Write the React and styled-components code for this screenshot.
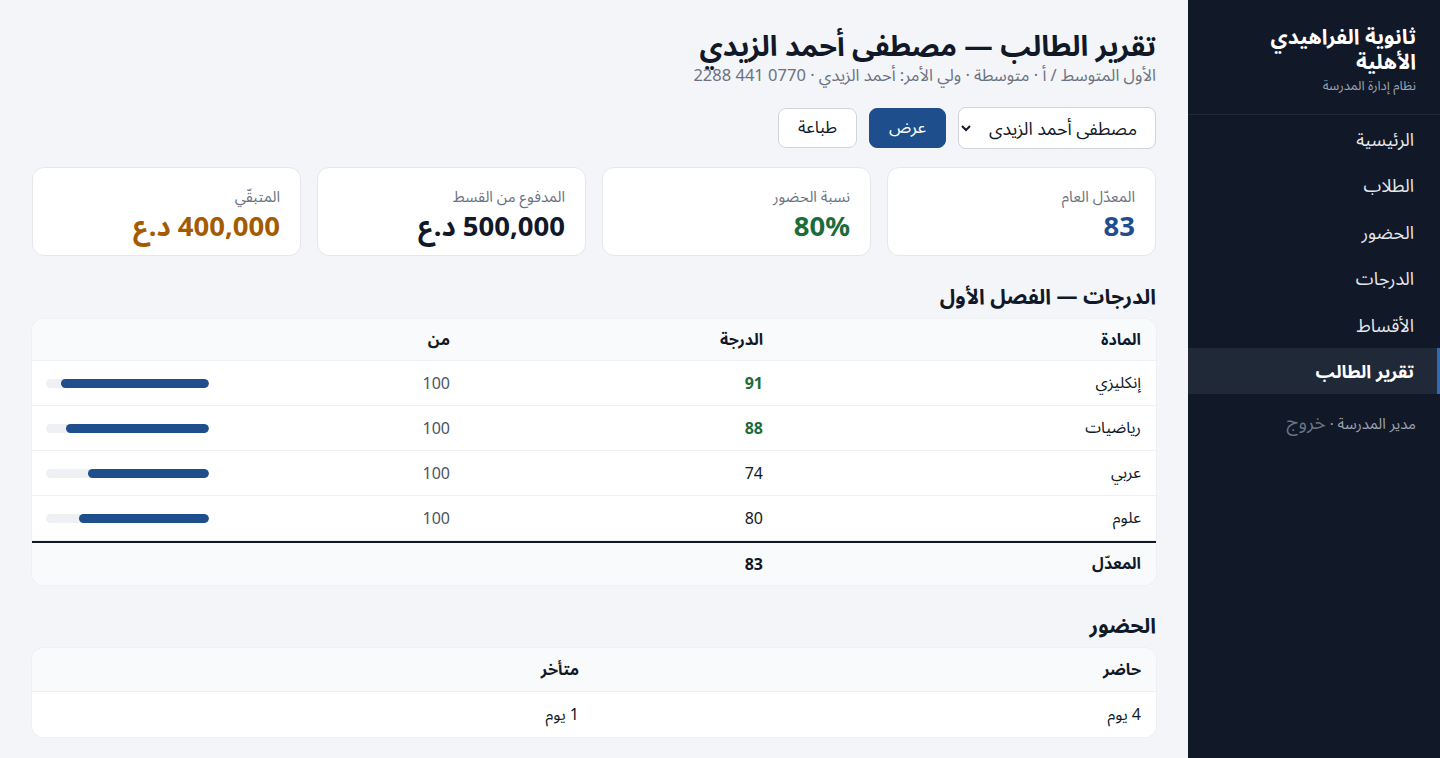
import React from 'react'
import styled, { createGlobalStyle } from 'styled-components'

const GlobalStyle = createGlobalStyle`
  html, body {
    margin: 0;
    padding: 0;
    background: #f3f5f8;
    font-family: "Noto Sans", "Noto Sans Arabic", sans-serif;
    color: #111827;
  }
  * { box-sizing: border-box; }
`

const grades = [
  { subject: 'إنكليزي', score: 91, max: 100 },
  { subject: 'رياضيات', score: 88, max: 100 },
  { subject: 'عربي', score: 74, max: 100 },
  { subject: 'علوم', score: 80, max: 100 },
]

const stats = [
  { label: 'المعدّل العام', value: '83', tone: '#1e4e8c' },
  { label: 'نسبة الحضور', value: '80%', tone: '#1c6b3a' },
  { label: 'المدفوع من القسط', value: '500,000 د.ع', tone: '#111827' },
  { label: 'المتبقّي', value: '400,000 د.ع', tone: '#a35a00' },
]

const nav = ['الرئيسية', 'الطلاب', 'الحضور', 'الدرجات', 'الأقساط', 'تقرير الطالب']

function App() {
  return (
    <>
      <GlobalStyle />
      <Layout dir='rtl'>
        <Sidebar>
          <Brand>
            <BrandName>ثانوية الفراهيدي الأهلية</BrandName>
            <BrandSub>نظام إدارة المدرسة</BrandSub>
          </Brand>
          <Nav>
            {nav.map((item) => (
              <NavItem key={item} $active={item === 'تقرير الطالب'}>
                {item}
              </NavItem>
            ))}
          </Nav>
          <UserLine>
            مدير المدرسة · <Logout>خروج</Logout>
          </UserLine>
        </Sidebar>

        <Main>
          <Title>تقرير الطالب — مصطفى أحمد الزيدي</Title>
          <Subtitle>الأول المتوسط / أ · متوسطة · ولي الأمر: أحمد الزيدي · 0770 441 2288</Subtitle>

          <Controls>
            <Select defaultValue='1'>
              <option value='1'>مصطفى أحمد الزيدى</option>
            </Select>
            <Button $primary>عرض</Button>
            <Button>طباعة</Button>
          </Controls>

          <Stats>
            {stats.map((s) => (
              <StatCard key={s.label}>
                <StatLabel>{s.label}</StatLabel>
                <StatValue $tone={s.tone}>{s.value}</StatValue>
              </StatCard>
            ))}
          </Stats>

          <SectionTitle>الدرجات — الفصل الأول</SectionTitle>
          <TableCard>
            <GradeRow $head>
              <Cell>المادة</Cell>
              <Cell>الدرجة</Cell>
              <Cell>من</Cell>
              <Cell />
            </GradeRow>
            {grades.map((g) => (
              <GradeRow key={g.subject}>
                <Cell>{g.subject}</Cell>
                <Score $high={g.score >= 85}>{g.score}</Score>
                <Muted>{g.max}</Muted>
                <Cell>
                  <Track>
                    <Fill style={{ width: `${(g.score / g.max) * 100}%` }} />
                  </Track>
                </Cell>
              </GradeRow>
            ))}
            <GradeRow $foot>
              <Cell $bold>المعدّل</Cell>
              <Cell $bold>83</Cell>
              <Cell />
              <Cell />
            </GradeRow>
          </TableCard>

          <SectionTitle>الحضور</SectionTitle>
          <TableCard>
            <AttRow $head>
              <Cell>حاضر</Cell>
              <Cell>متأخر</Cell>
            </AttRow>
            <AttRow>
              <Cell>4 يوم</Cell>
              <Cell>1 يوم</Cell>
            </AttRow>
          </TableCard>
        </Main>
      </Layout>
    </>
  )
}

export default App

const Layout = styled.div`
  display: flex;
  min-height: 758px;
`
const Sidebar = styled.aside`
  width: 252px;
  flex-shrink: 0;
  background: #111827;
  color: #f3f4f6;
  display: flex;
  flex-direction: column;
`
const Brand = styled.div`
  padding: 24px 24px 20px;
  border-bottom: 1px solid #1f2937;
`
const BrandName = styled.div`
  font-size: 21px;
  font-weight: 700;
  line-height: 25px;
  color: #ffffff;
`
const BrandSub = styled.div`
  font-size: 13px;
  line-height: 18px;
  color: #9ca3af;
  margin-top: 2px;
`
const Nav = styled.nav`
  display: flex;
  flex-direction: column;
  padding-top: 1px;
`
const NavItem = styled.a`
  display: block;
  height: 46.4px;
  line-height: 46px;
  padding: 0 23px 0 20px;
  font-size: 18px;
  color: ${(p) => (p.$active ? '#ffffff' : '#e5e7eb')};
  font-weight: ${(p) => (p.$active ? 700 : 400)};
  background: ${(p) => (p.$active ? '#1f2937' : 'transparent')};
  border-right: 3px solid ${(p) => (p.$active ? '#2f6bb3' : 'transparent')};
  cursor: pointer;
`
const UserLine = styled.div`
  padding: 17px 24px 0;
  font-size: 15px;
  line-height: 22px;
  color: #9ca3af;
`
const Logout = styled.span`
  font-size: 19px;
  color: #6b7280;
`
const Main = styled.main`
  flex: 1;
  padding: 27px 32px 20px;
  min-width: 0;
`
const Title = styled.h1`
  margin: 0;
  font-size: 28.5px;
  font-weight: 700;
  line-height: 36px;
  color: #111827;
`
const Subtitle = styled.div`
  font-size: 16.5px;
  line-height: 22px;
  margin-top: 1px;
  color: #6b7280;
`
const Controls = styled.div`
  display: flex;
  gap: 12px;
  margin-top: 21px;
  align-items: center;
`
const Select = styled.select`
  width: 198px;
  height: 42px;
  padding: 0 14px;
  font-family: inherit;
  font-size: 17.8px;
  color: #111827;
  background: #ffffff;
  border: 1px solid #d1d5db;
  border-radius: 8px;
`
const Button = styled.button`
  height: 40px;
  padding: 0 19px;
  font-family: inherit;
  font-size: 17px;
  border-radius: 8px;
  cursor: pointer;
  border: 1px solid ${(p) => (p.$primary ? '#1e4e8c' : '#d1d5db')};
  background: ${(p) => (p.$primary ? '#1e4e8c' : '#ffffff')};
  color: ${(p) => (p.$primary ? '#ffffff' : '#111827')};
`
const Stats = styled.div`
  display: grid;
  grid-template-columns: repeat(4, 1fr);
  gap: 16px;
  margin-top: 18px;
`
const StatCard = styled.div`
  background: #ffffff;
  border: 1px solid #e5e7eb;
  border-radius: 12px;
  height: 89px;
  padding: 18px 20px 0;
`
const StatLabel = styled.div`
  font-size: 15px;
  line-height: 20px;
  color: #6b7280;
`
const StatValue = styled.div`
  font-size: 27.5px;
  font-weight: 700;
  line-height: 36px;
  margin-top: 2px;
  color: ${(p) => p.$tone};
`
const SectionTitle = styled.h2`
  margin: 26px 0 9px;
  font-size: 21px;
  font-weight: 700;
  line-height: 28px;
  color: #111827;
`
const TableCard = styled.div`
  background: #ffffff;
  border-radius: 12px;
  overflow: hidden;
  box-shadow: 0 0 0 1px #eef0f3;
`
const GradeRow = styled.div`
  display: grid;
  grid-template-columns: 378px 313px 1fr 193px;
  align-items: center;
  height: ${(p) => (p.$head ? '42px' : p.$foot ? '44px' : '45px')};
  background: ${(p) => (p.$head || p.$foot ? '#f9fafb' : '#ffffff')};
  border-bottom: 1px solid #eef0f3;
  border-top: ${(p) => (p.$foot ? '2px solid #111827' : 'none')};
  font-weight: ${(p) => (p.$head ? 700 : 400)};
  &:last-child { border-bottom: none; }
`
const AttRow = styled.div`
  display: grid;
  grid-template-columns: 1fr 1fr;
  align-items: center;
  height: ${(p) => (p.$head ? '44px' : '45px')};
  background: ${(p) => (p.$head ? '#f9fafb' : '#ffffff')};
  border-bottom: 1px solid #eef0f3;
  font-weight: ${(p) => (p.$head ? 700 : 400)};
  &:last-child { border-bottom: none; }
`
const Cell = styled.div`
  padding: 0 15px;
  font-size: 16px;
  color: #111827;
  font-weight: ${(p) => (p.$bold ? 700 : 'inherit')};
`
const Score = styled(Cell)`
  color: ${(p) => (p.$high ? '#1c6b3a' : '#111827')};
  font-weight: ${(p) => (p.$high ? 700 : 400)};
`
const Muted = styled(Cell)`
  color: #4b5563;
`
const Track = styled.div`
  width: 163px;
  height: 9px;
  margin-right: 1px;
  background: #eef0f3;
  border-radius: 5px;
  overflow: hidden;
  display: flex;
`
const Fill = styled.div`
  height: 100%;
  background: #1e4e8c;
  border-radius: 5px;
`
